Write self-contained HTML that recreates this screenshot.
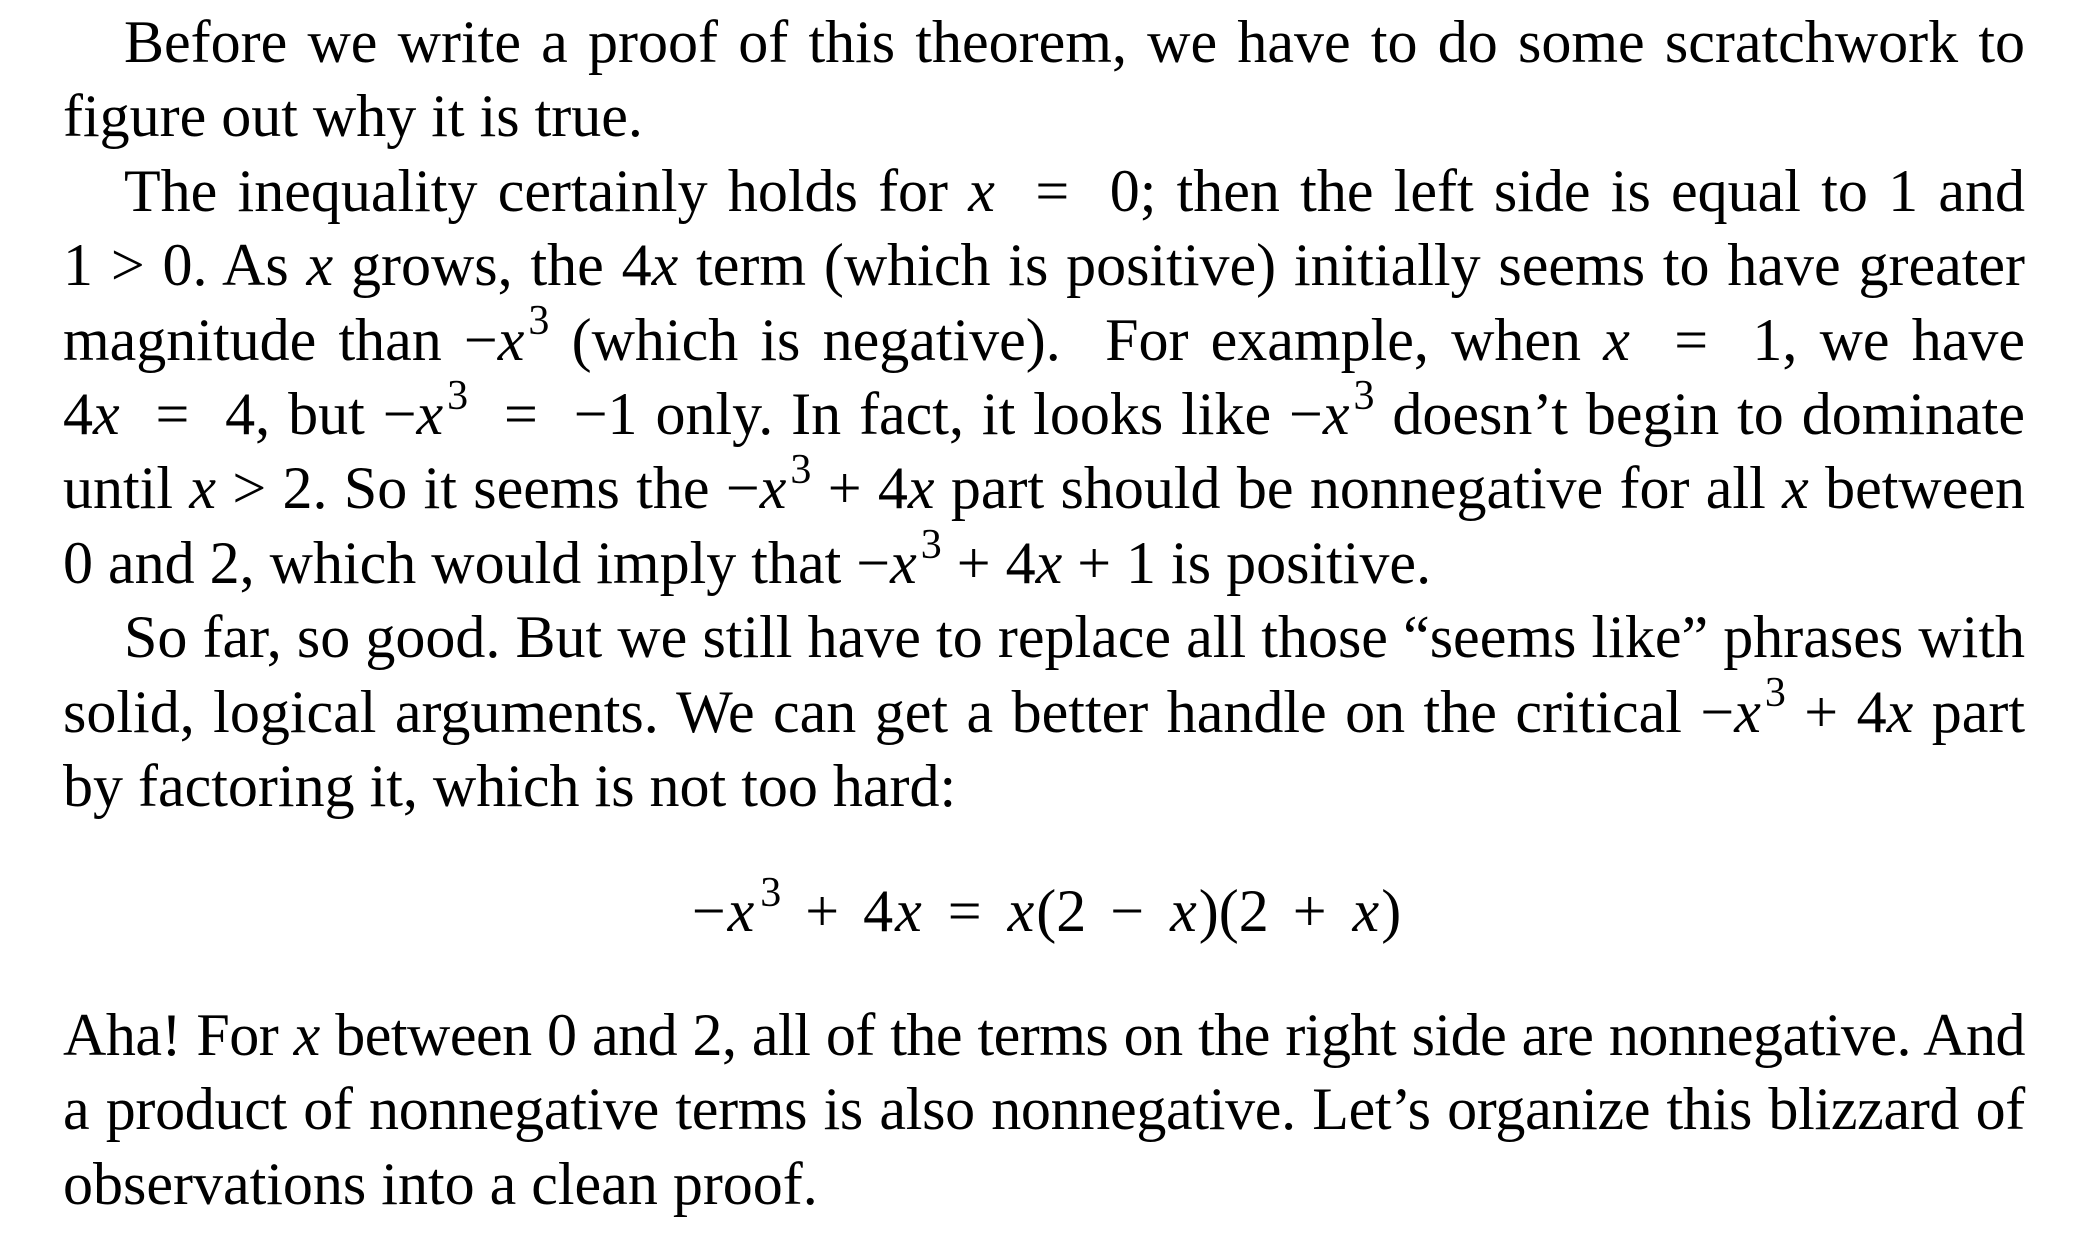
<!DOCTYPE html>
<html><head><meta charset="utf-8"><style>
html,body{margin:0;padding:0;background:#fff;}
body{width:2078px;height:1242px;position:relative;overflow:hidden;font-family:"Liberation Serif","Times New Roman",serif;font-size:60px;color:#000;}
.blk{position:absolute;left:63px;width:1962px;line-height:74.4px;}
.l{white-space:nowrap;text-align:justify;text-align-last:justify;height:74.4px;}
.e{text-align-last:left;}
.ind{padding-left:61px;}
i{font-style:italic;}
sup{font-size:0.7em;line-height:0;vertical-align:0.6em;margin-left:4px;}
.eq{position:absolute;left:0;width:2093px;text-align:center;line-height:74.4px;white-space:nowrap;word-spacing:9px;}
.eq i{margin:0 2px;}
</style></head><body>
<div class="blk" style="top:5px">
<div class="l ind">Before we write a proof of this theorem, we have to do some scratchwork to</div>
<div class="l e">figure out why it is true.</div>
<div class="l ind">The inequality certainly holds for <i>x</i> &nbsp;= &nbsp;0; then the left side is equal to 1 and</div>
<div class="l">1 &gt; 0. As <i>x</i> grows, the 4<i>x</i> term (which is positive) initially seems to have greater</div>
<div class="l">magnitude than −<i>x</i><sup>3</sup> (which is negative). &nbsp;For example, when <i>x</i> &nbsp;= &nbsp;1, we have</div>
<div class="l">4<i>x</i> &nbsp;= &nbsp;4, but −<i>x</i><sup>3</sup> &nbsp;= &nbsp;−1 only. In fact, it looks like −<i>x</i><sup>3</sup> doesn’t begin to dominate</div>
<div class="l">until <i>x</i> &gt; 2. So it seems the −<i>x</i><sup>3</sup> + 4<i>x</i> part should be nonnegative for all <i>x</i> between</div>
<div class="l e">0 and 2, which would imply that −<i>x</i><sup>3</sup> + 4<i>x</i> + 1 is positive.</div>
<div class="l ind">So far, so good. But we still have to replace all those “seems like” phrases with</div>
<div class="l">solid, logical arguments. We can get a better handle on the critical −<i>x</i><sup>3</sup> + 4<i>x</i> part</div>
<div class="l e">by factoring it, which is not too hard:</div>
</div>
<div class="eq" style="top:874px">−<i>x</i><sup>3</sup> + 4<i>x</i> = <i>x</i>(2 − <i>x</i>)(2 + <i>x</i>)</div>
<div class="blk" style="top:998px">
<div class="l" style="letter-spacing:-0.5px">Aha! For <i>x</i> between 0 and 2, all of the terms on the right side are nonnegative. And</div>
<div class="l" style="letter-spacing:-0.3px">a product of nonnegative terms is also nonnegative. Let’s organize this blizzard of</div>
<div class="l e">observations into a clean proof.</div>
</div>
</body></html>
